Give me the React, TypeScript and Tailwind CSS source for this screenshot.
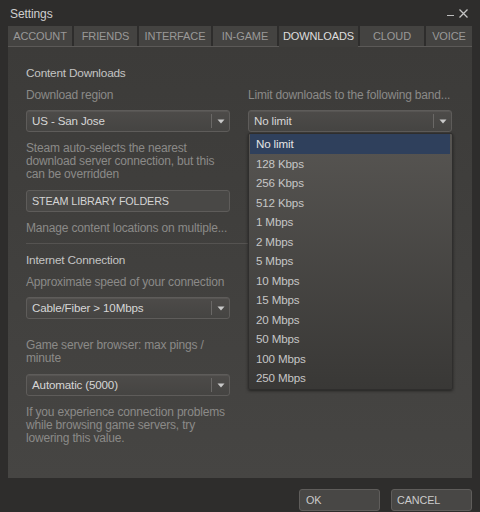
import React from 'react'

const FONT = "font-['Liberation_Sans',Arial,sans-serif]"

const TABS = ['ACCOUNT', 'FRIENDS', 'INTERFACE', 'IN-GAME', 'DOWNLOADS', 'CLOUD', 'VOICE']
const TAB_W = [64, 63, 72, 64, 79, 64, 46]

const SPEEDS = [
  'No limit', '128 Kbps', '256 Kbps', '512 Kbps', '1 Mbps', '2 Mbps', '5 Mbps',
  '10 Mbps', '15 Mbps', '20 Mbps', '50 Mbps', '100 Mbps', '250 Mbps',
]

function Arrow() {
  return (
    <svg width="8" height="5" viewBox="0 0 8 5" className="block">
      <path d="M0.5 0.5 L7.5 0.5 L4 4.5 Z" fill="#c9c9c9" />
    </svg>
  )
}

function Select({ value }: { value: string }) {
  return (
    <div className="flex h-[22px] items-center rounded-[3px] border border-[#5e5c5a] bg-gradient-to-b from-[#4d4b49] to-[#454442] shadow-[inset_0_1px_0_#575553]">
      <span className="flex-1 pl-[5px] text-[11.6px] tracking-[-0.15px] text-[#d6d6d6]">{value}</span>
      <span className="h-[14px] w-px bg-[#6a6866]" />
      <span className="flex w-[17px] justify-center"><Arrow /></span>
    </div>
  )
}

function Label({ children, className = '' }: { children: React.ReactNode; className?: string }) {
  return <div className={`whitespace-nowrap text-[12px] leading-[13px] tracking-[-0.18px] text-[#8b8a88] ${className}`}>{children}</div>
}

function Heading({ children, className = '' }: { children: React.ReactNode; className?: string }) {
  return <div className={`text-[11.8px] leading-[14px] tracking-[-0.2px] text-[#c4c4c4] ${className}`}>{children}</div>
}

export default function App() {
  return (
    <div className={`${FONT} relative h-[512px] w-[480px] overflow-hidden bg-[#2e2d2c]`}>
      {/* title bar */}
      <div className="flex h-[26px] items-center justify-between pl-[10px] pr-[12px] pt-px">
        <span className="text-[12px] tracking-[-0.1px] text-[#cfcfcf]">Settings</span>
        <div className="flex items-center gap-[5px] text-[#bdbdbd]">
          <span className="mt-[4px] block h-px w-[7px] bg-[#bdbdbd]" />
          <svg width="9" height="9" viewBox="0 0 9 9"><path d="M0.5 0.5 L8.5 8.5 M8.5 0.5 L0.5 8.5" stroke="#c4c4c4" strokeWidth="1.3" /></svg>
        </div>
      </div>

      {/* tabs */}
      <div className="mx-[8px] flex gap-[2px] border-b border-[#5b5957]">
        {TABS.map((t, i) => {
          const active = t === 'DOWNLOADS'
          return (
            <div
              key={t}
              style={{ width: TAB_W[i] }}
              className={
                active
                  ? 'relative -mb-px flex h-[21px] items-center justify-center bg-[#3e3d3b] text-[11px] tracking-[-0.1px] text-[#dedede]'
                  : 'flex h-[20px] items-center justify-center bg-[#444341] text-[11px] tracking-[-0.1px] text-[#9a9998]'
              }
            >
              {t}
            </div>
          )
        })}
      </div>

      {/* content panel */}
      <div className="mx-[8px] h-[431px] bg-gradient-to-b from-[#3c3b39] to-[#464543] px-[18px] pt-[19px]">
        <div className="grid grid-cols-[204px_204px] gap-x-[18px]">
          <div>
            <Heading>Content Downloads</Heading>
            <Label className="mt-[9px]">Download region</Label>
            <div className="mt-[8px]"><Select value="US - San Jose" /></div>
            <Label className="mt-[10px]">
              Steam auto-selects the nearest<br />download server connection, but this<br />can be overridden
            </Label>
            <div className="mt-[9px] flex h-[22px] items-center rounded-[3px] border border-[#5e5c5a] bg-[#494846] pl-[5px] text-[10.8px] tracking-[-0.15px] text-[#d4d4d4]">
              STEAM LIBRARY FOLDERS
            </div>
            <Label className="mt-[10px]">Manage content locations on multiple...</Label>
          </div>
          <div>
            <Label className="mt-[23px]">Limit downloads to the following band...</Label>
            <div className="mt-[8px]"><Select value="No limit" /></div>
          </div>
        </div>

        <div className="mt-[8px] h-px w-[224px] bg-[#555351]" />

        <div className="w-[204px]">
          <Heading className="mt-[9px]">Internet Connection</Heading>
          <Label className="mt-[9px]">Approximate speed of your connection</Label>
          <div className="mt-[8px]"><Select value="Cable/Fiber > 10Mbps" /></div>
          <Label className="mt-[20px]">Game server browser: max pings /<br />minute</Label>
          <div className="mt-[9px]"><Select value="Automatic (5000)" /></div>
          <Label className="mt-[10px]">
            If you experience connection problems<br />while browsing game servers, try<br />lowering this value.
          </Label>
        </div>
      </div>

      {/* footer buttons */}
      <div className="mr-[8px] mt-[11px] flex justify-end gap-[11px]">
        <div className="flex h-[22px] w-[81px] items-center rounded-[3px] border border-[#5f5d5b] bg-[#484745] pl-[6px] text-[10.8px] tracking-[-0.1px] text-[#cbcbcb]">OK</div>
        <div className="flex h-[22px] w-[81px] items-center rounded-[3px] border border-[#5f5d5b] bg-[#484745] pl-[5px] text-[10.8px] tracking-[-0.1px] text-[#cbcbcb]">CANCEL</div>
      </div>

      {/* open dropdown list */}
      <div className="absolute left-[248px] top-[133px] w-[205px] rounded-[2px] border border-[#2f2e2d] bg-gradient-to-b from-[#575552] to-[#393836] pb-px pl-px pr-[2px] shadow-[0_1px_3px_rgba(0,0,0,0.5)]">
        {SPEEDS.map((s, i) => (
          <div
            key={s}
            className={
              i === 0
                ? 'flex h-[19.5px] items-center bg-[#2f405c] pl-[6px] text-[11.6px] tracking-[-0.15px] text-[#e4e4e4]'
                : 'flex h-[19.5px] items-center pl-[6px] text-[11.6px] tracking-[-0.15px] text-[#c6c6c6]'
            }
          >
            {s}
          </div>
        ))}
      </div>
    </div>
  )
}
